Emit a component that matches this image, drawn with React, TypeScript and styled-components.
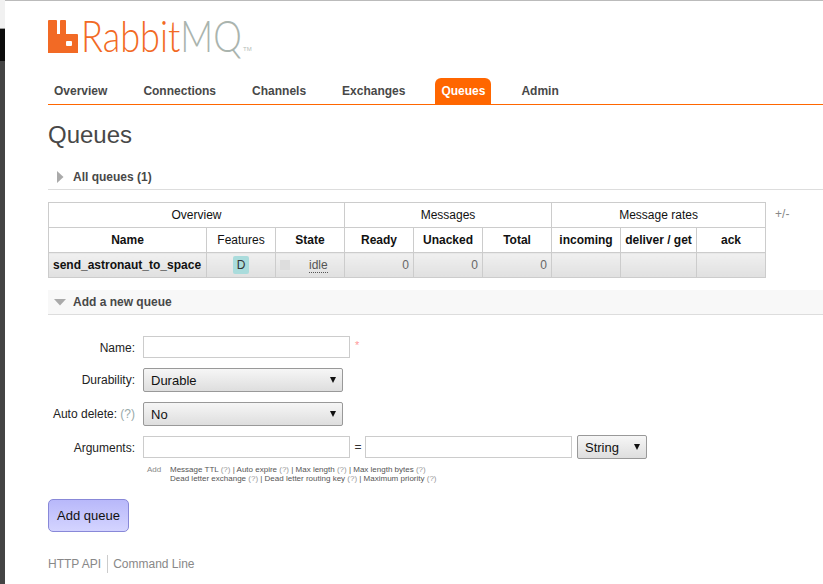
import React from "react";
import styled, { createGlobalStyle } from "styled-components";

const Global = createGlobalStyle`
  html, body { margin: 0; padding: 0; background: #fff; overflow: hidden; }
  body { font-family: "Liberation Sans", Arial, sans-serif; font-size: 12px; color: #484848; }
  * { box-sizing: border-box; }
`;

const Frame = styled.div`
  display: flex;
  width: 823px;
  height: 584px;
  overflow: hidden;
`;
const Strip = styled.div`
  width: 5px;
  flex: none;
  display: flex;
  flex-direction: column;
`;
const StripPart = styled.div<{ $h?: number; $c: string }>`
  background: ${(p) => p.$c};
  ${(p) => (p.$h ? `height: ${p.$h}px;` : "flex: 1;")}
`;
const Page = styled.div`
  flex: 1;
  min-width: 0;
  border-top: 1px solid #bbb;
  padding: 0 0 0 43px;
`;
const LogoRow = styled.div`
  height: 53px;
  padding-top: 19px;
  display: flex;
  align-items: flex-start;
`;
const Brand = styled.div`
  display: flex;
  align-items: flex-start;
  height: 34px;
`;
const LogoMark = styled.svg`
  width: 30px;
  height: 33px;
  flex: none;
`;
const Wordmark = styled.span`
  display: block;
  width: 161px;
  margin-left: 3px;
  font-family: Lato, "Open Sans", sans-serif;
  font-weight: 300;
  font-size: 43px;
  line-height: 32px;
  white-space: nowrap;
  transform: scaleX(0.84);
  transform-origin: left top;
`;
const BrandText = styled.span<{ $grey?: boolean }>`
  color: ${(p) => (p.$grey ? "#aab4ae" : "#f26a25")};
`;
const Tm = styled.span`
  font-size: 6px;
  color: #b5bdb8;
  margin: 26px 0 0 1px;
`;
const Nav = styled.ul`
  list-style: none;
  margin: 0;
  padding: 24px 0 0;
  height: 51px;
  display: flex;
  align-items: flex-end;
  border-bottom: 1px solid #f60;
  gap: 24px;
`;
const NavItem = styled.li<{ $on?: boolean }>`
  height: 26px;
  line-height: 26px;
  padding: 0 6px;
  font-weight: 700;
  border-radius: ${(p) => (p.$on ? "6px 6px 0 0" : "0")};
  background: ${(p) => (p.$on ? "#f60" : "transparent")};
  color: ${(p) => (p.$on ? "#fff" : "#484848")};
`;
const Title = styled.h1`
  margin: 16px 0 0;
  font-size: 24px;
  line-height: 27px;
  font-weight: 400;
  color: #484848;
`;
const SectionHead = styled.div<{ $open?: boolean }>`
  display: flex;
  align-items: center;
  height: 25px;
  margin-top: ${(p) => (p.$open ? 12 : 17)}px;
  font-weight: 700;
  color: #484848;
  border-bottom: 1px solid #ddd;
  background: ${(p) => (p.$open ? "#f8f8f8" : "transparent")};
`;
const ArrowBox = styled.span<{ $open?: boolean }>`
  width: 25px;
  flex: none;
  display: flex;
  justify-content: center;
  align-items: center;
  padding-right: ${(p) => (p.$open ? 2 : 0)}px;
`;
const TableRow = styled.div`
  display: flex;
  align-items: flex-start;
  margin-top: 12px;
`;
const Table = styled.table`
  border-collapse: collapse;
  table-layout: fixed;
  width: 718px;
  font-size: 12px;
  color: #111;
  th, td { border: 1px solid #ccc; padding: 0; height: 25px; text-align: center; }
`;
const GroupCell = styled.th`
  font-weight: 400;
`;
const ColHead = styled.th<{ $light?: boolean }>`
  font-weight: ${(p) => (p.$light ? 400 : 700)};
`;
const DataRow = styled.tr`
  background: linear-gradient(#f0f0f0, #e0e0e0);
`;
const NameCell = styled.td`
  text-align: left !important;
  padding-left: 4px !important;
  font-weight: 700;
  white-space: nowrap;
  background: linear-gradient(#f0f0f0, #e0e0e0);
`;
const PlainCell = styled.td`
  background: linear-gradient(#f0f0f0, #e0e0e0);
`;
const NumCell = styled.td`
  text-align: right !important;
  padding-right: 4px !important;
  color: #666;
  background: linear-gradient(#f0f0f0, #e0e0e0);
`;
const Badge = styled.span`
  display: inline-block;
  width: 16px;
  height: 18px;
  line-height: 18px;
  border-radius: 2px;
  background: #aadcdc;
  color: #333;
`;
const StateInner = styled.div`
  display: flex;
  align-items: center;
  padding-left: 4px;
`;
const StateDot = styled.span`
  width: 10px;
  height: 10px;
  background: #ddd;
`;
const StateText = styled.span`
  margin: 2px 0 0 19px;
  color: #555;
  border-bottom: 1px dotted #555;
  line-height: 13px;
`;
const PlusMinus = styled.span`
  margin-left: 9px;
  line-height: 24px;
  color: #888;
`;
const Form = styled.div`
  margin-top: 21px;
  display: flex;
  flex-direction: column;
`;
const FormRow = styled.div<{ $h: number; $mt?: number }>`
  display: flex;
  align-items: center;
  height: ${(p) => p.$h}px;
  margin-top: ${(p) => p.$mt ?? 0}px;
`;
const Label = styled.label<{ $low?: boolean }>`
  width: 87px;
  flex: none;
  text-align: right;
  color: #222;
  white-space: nowrap;
  margin-top: ${(p) => (p.$low ? 2 : 0)}px;
`;
const Help = styled.span`
  color: #9aa;
`;
const TextInput = styled.input`
  width: 207px;
  height: 22px;
  margin-left: 8px;
  border: 1px solid #ccc;
  background: #fff;
  padding: 0;
`;
const Star = styled.span`
  margin: -5px 0 0 5px;
  color: #f99;
  font-size: 11px;
`;
const Select = styled.div<{ $w: number; $ml?: number }>`
  width: ${(p) => p.$w}px;
  height: 24px;
  margin-left: ${(p) => p.$ml ?? 8}px;
  border: 1px solid #999;
  border-radius: 2px;
  background: linear-gradient(#f6f6f6, #dedede);
  display: flex;
  align-items: center;
  justify-content: space-between;
  padding: 2px 6px 0 7px;
  font-size: 13px;
  line-height: 20px;
  color: #111;
`;
const Caret = styled.svg`
  width: 6px;
  height: 6px;
  margin-top: -3px;
`;
const Equals = styled.span`
  margin: 0 3px 0 4px;
  width: 8px;
  text-align: center;
  color: #333;
`;
const PlainInput = styled(TextInput)`
  margin-left: 0;
`;
const Hints = styled.div`
  display: flex;
  margin: 6px 0 0 99px;
  font-size: 8px;
  line-height: 9px;
  color: #555;
`;
const AddWord = styled.span`
  width: 23px;
  flex: none;
  color: #888;
`;
const HintBlock = styled.div`
  display: flex;
  flex-direction: column;
`;
const Muted = styled.span`
  color: #999;
`;
const Submit = styled.button`
  display: block;
  margin-top: 16px;
  width: 81px;
  height: 33px;
  border: 1px solid #8888d8;
  border-radius: 5px;
  background: linear-gradient(#b8b8fa, #d4d4ff);
  font-family: inherit;
  font-size: 13px;
  color: #111;
  padding: 0;
`;
const Footer = styled.div`
  display: flex;
  align-items: center;
  margin-top: 23px;
  color: #888;
`;
const FootLink = styled.span`
  line-height: 18px;
`;
const FootLinkNext = styled(FootLink)`
  margin-left: 6px;
  padding-left: 5px;
  border-left: 1px solid #ccc;
`;

const Tri = ({ open }: { open?: boolean }) =>
  open ? (
    <svg width="12" height="7" viewBox="0 0 12 7"><path d="M0 0h12L6 6.5z" fill="#aaa" /></svg>
  ) : (
    <svg width="7" height="12" viewBox="0 0 7 12"><path d="M0 0l6.5 6L0 12z" fill="#aaa" /></svg>
  );

const Arrow = () => (
  <Caret viewBox="0 0 6 6"><path d="M0 0h6L3 6z" fill="#111" /></Caret>
);

const Q = () => <Muted>(?)</Muted>;

export default function App() {
  return (
    <Frame>
      <Global />
      <Strip>
        <StripPart $h={28} $c="#f1f1f1" />
        <StripPart $h={1} $c="#999" />
        <StripPart $h={32} $c="#0c0c0c" />
        <StripPart $c="#444" />
      </Strip>
      <Page>
        <LogoRow>
          <Brand>
            <LogoMark viewBox="0 0 30 33">
              <path
                fill="#f26a25"
                fillRule="evenodd"
                d="M0 1a1 1 0 0 1 1-1h7a1 1 0 0 1 1 1v13h3V1a1 1 0 0 1 1-1h4a1 1 0 0 1 1 1v13h11a1 1 0 0 1 1 1v18H0zM19 21a1 1 0 0 0-1 1v3a1 1 0 0 0 1 1h4a1 1 0 0 0 1-1v-3a1 1 0 0 0-1-1z"
              />
            </LogoMark>
            <Wordmark>
              <BrandText>Rabbit</BrandText>
              <BrandText $grey>MQ</BrandText>
            </Wordmark>
            <Tm>TM</Tm>
          </Brand>
        </LogoRow>
        <Nav>
          <NavItem>Overview</NavItem>
          <NavItem>Connections</NavItem>
          <NavItem>Channels</NavItem>
          <NavItem>Exchanges</NavItem>
          <NavItem $on>Queues</NavItem>
          <NavItem>Admin</NavItem>
        </Nav>
        <Title>Queues</Title>
        <SectionHead>
          <ArrowBox><Tri /></ArrowBox>
          All queues (1)
        </SectionHead>
        <TableRow>
          <Table>
            <colgroup>
              <col width="158" />
              <col width="69" />
              <col width="69" />
              <col width="69" />
              <col width="69" />
              <col width="69" />
              <col width="69" />
              <col width="76" />
              <col width="69" />
            </colgroup>
            <thead>
              <tr>
                <GroupCell colSpan={3}>Overview</GroupCell>
                <GroupCell colSpan={3}>Messages</GroupCell>
                <GroupCell colSpan={3}>Message rates</GroupCell>
              </tr>
              <tr>
                <ColHead>Name</ColHead>
                <ColHead $light>Features</ColHead>
                <ColHead>State</ColHead>
                <ColHead>Ready</ColHead>
                <ColHead>Unacked</ColHead>
                <ColHead>Total</ColHead>
                <ColHead>incoming</ColHead>
                <ColHead>deliver / get</ColHead>
                <ColHead>ack</ColHead>
              </tr>
            </thead>
            <tbody>
              <DataRow>
                <NameCell>send_astronaut_to_space</NameCell>
                <PlainCell><Badge>D</Badge></PlainCell>
                <PlainCell>
                  <StateInner><StateDot /><StateText>idle</StateText></StateInner>
                </PlainCell>
                <NumCell>0</NumCell>
                <NumCell>0</NumCell>
                <NumCell>0</NumCell>
                <PlainCell />
                <PlainCell />
                <PlainCell />
              </DataRow>
            </tbody>
          </Table>
          <PlusMinus>+/-</PlusMinus>
        </TableRow>
        <SectionHead $open>
          <ArrowBox $open><Tri open /></ArrowBox>
          Add a new queue
        </SectionHead>
        <Form>
          <FormRow $h={22}>
            <Label $low>Name:</Label>
            <TextInput />
            <Star>*</Star>
          </FormRow>
          <FormRow $h={24} $mt={10}>
            <Label>Durability:</Label>
            <Select $w={200}>Durable<Arrow /></Select>
          </FormRow>
          <FormRow $h={24} $mt={10}>
            <Label>Auto delete: <Help>(?)</Help></Label>
            <Select $w={200}>No<Arrow /></Select>
          </FormRow>
          <FormRow $h={24} $mt={9}>
            <Label $low>Arguments:</Label>
            <TextInput />
            <Equals>=</Equals>
            <PlainInput />
            <Select $w={70} $ml={5}>String<Arrow /></Select>
          </FormRow>
          <Hints>
            <AddWord>Add</AddWord>
            <HintBlock>
              <span>Message TTL <Q /> | Auto expire <Q /> | Max length <Q /> | Max length bytes <Q /></span>
              <span>Dead letter exchange <Q /> | Dead letter routing key <Q /> | Maximum priority <Q /></span>
            </HintBlock>
          </Hints>
        </Form>
        <Submit>Add queue</Submit>
        <Footer>
          <FootLink>HTTP API</FootLink>
          <FootLinkNext>Command Line</FootLinkNext>
        </Footer>
      </Page>
    </Frame>
  );
}
